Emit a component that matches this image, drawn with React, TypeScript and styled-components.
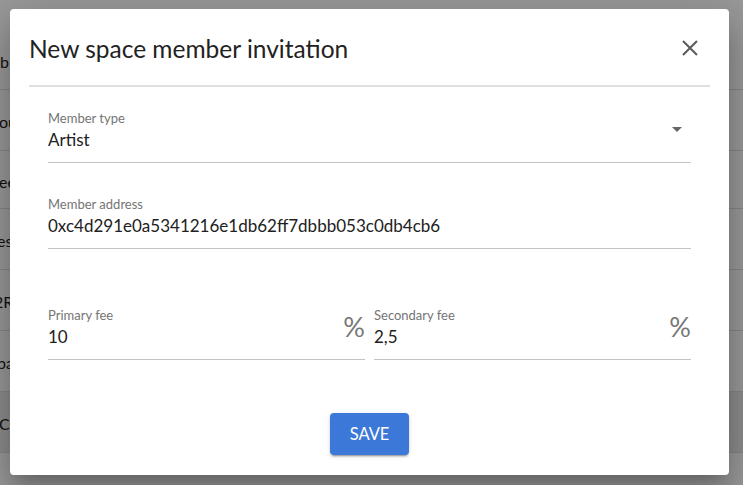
import React from "react";
import styled, { createGlobalStyle } from "styled-components";

const Global = createGlobalStyle`
  html, body { margin: 0; padding: 0; }
  body { font-family: Lato, "Open Sans", sans-serif; background: #fff; }
  * { box-sizing: border-box; }
`;

const Page = styled.div`
  position: relative;
  width: 743px;
  height: 485px;
  overflow: hidden;
  background: #fff;
`;

const BgList = styled.div`
  display: flex;
  flex-direction: column;
  padding-top: 31px;
`;

const BgRow = styled.div<{ $h: number; $hl?: boolean }>`
  height: ${(p) => p.$h}px;
  border-bottom: 1px solid #e0e0e0;
  display: flex;
  align-items: center;
  font-size: 16px;
  color: #1e1e1e;
  background: ${(p) => (p.$hl ? "#ececec" : "transparent")};
  white-space: nowrap;
  padding-top: 3px;
`;

const BgText = styled.span<{ $off: number }>`
  margin-left: ${(p) => p.$off}px;
`;

const Backdrop = styled.div`
  position: absolute;
  inset: 0;
  background: rgba(0, 0, 0, 0.4);
  display: flex;
  padding: 9px 14px 10px 10px;
`;

const Dialog = styled.div`
  flex: 1;
  background: #fff;
  border-radius: 4px;
  box-shadow: 0 11px 15px -7px rgba(0,0,0,0.2), 0 24px 38px 3px rgba(0,0,0,0.14), 0 9px 46px 8px rgba(0,0,0,0.12);
  display: flex;
  flex-direction: column;
`;

const Header = styled.div`
  display: flex;
  align-items: center;
  justify-content: space-between;
  height: 78px;
  margin: 0 19px;
  padding: 2px 12px 0 0;
  border-bottom: 2px solid #e0e0e0;
`;

const Title = styled.h2`
  margin: 0;
  font-size: 24.5px;
  font-weight: 400;
  color: #222;
`;

const CloseBtn = styled.button`
  border: none;
  background: none;
  padding: 0;
  width: 16px;
  height: 16px;
  display: flex;
  cursor: pointer;
`;

const Body = styled.div`
  display: flex;
  flex-direction: column;
  padding: 23px 38px 0 38px;
`;

const Field = styled.div<{ $mt?: number }>`
  display: flex;
  align-items: flex-end;
  margin-top: ${(p) => p.$mt ?? 0}px;
  border-bottom: 1px solid #c4c4c4;
  flex: 1;
`;

const FieldInner = styled.div`
  flex: 1;
  display: flex;
  flex-direction: column;
  padding-bottom: 11px;
`;

const Label = styled.label`
  font-size: 13px;
  color: #757575;
  line-height: 16px;
`;

const Value = styled.div`
  font-size: 17px;
  color: #212121;
  line-height: 22px;
  margin-top: 3px;
`;

const Arrow = styled.div`
  width: 0;
  height: 0;
  border-left: 5px solid transparent;
  border-right: 5px solid transparent;
  border-top: 5px solid #666;
  margin: 0 9px 30px 0;
`;

const Percent = styled.span`
  font-size: 27px;
  font-weight: 400;
  color: #777;
  line-height: 28px;
  margin-bottom: 18px;
`;

const FeeRow = styled.div`
  display: flex;
  gap: 9px;
  margin-top: 58px;
`;

const Footer = styled.div`
  display: flex;
  justify-content: center;
  padding-top: 53px;
`;

const SaveBtn = styled.button`
  width: 79px;
  height: 42px;
  border: none;
  border-radius: 4px;
  background: #3c78d8;
  color: #fff;
  font-family: Lato, sans-serif;
  font-size: 16.5px;
  text-transform: uppercase;
  box-shadow: 0 3px 1px -2px rgba(0,0,0,0.2), 0 2px 2px 0 rgba(0,0,0,0.14), 0 1px 5px 0 rgba(0,0,0,0.12);
  cursor: pointer;
`;

const bgRows: { t: string; off: number; h: number; hl?: boolean }[] = [
  { t: "b", off: 0, h: 59 },
  { t: "ou", off: -1, h: 61 },
  { t: "ee", off: -1, h: 58 },
  { t: "es", off: -3, h: 61 },
  { t: "2R", off: -6, h: 61 },
  { t: "pa", off: -3, h: 61 },
  { t: "C", off: -1, h: 61, hl: true },
];

export default function App() {
  return (
    <>
      <Global />
      <Page>
        <BgList>
          {bgRows.map((r, i) => (
            <BgRow key={i} $h={r.h} $hl={r.hl}>
              <BgText $off={r.off}>{r.t}</BgText>
            </BgRow>
          ))}
        </BgList>
        <Backdrop>
          <Dialog>
            <Header>
              <Title>New space member invitation</Title>
              <CloseBtn aria-label="close">
                <svg width="16" height="16" viewBox="0 0 16 16">
                  <path d="M1 1 L15 15 M15 1 L1 15" stroke="#5a5a5a" strokeWidth="2" />
                </svg>
              </CloseBtn>
            </Header>
            <Body>
              <Field>
                <FieldInner>
                  <Label>Member type</Label>
                  <Value>Artist</Value>
                </FieldInner>
                <Arrow />
              </Field>
              <Field $mt={33}>
                <FieldInner>
                  <Label>Member address</Label>
                  <Value>0xc4d291e0a5341216e1db62ff7dbbb053c0db4cb6</Value>
                </FieldInner>
              </Field>
              <FeeRow>
                <Field>
                  <FieldInner>
                    <Label>Primary fee</Label>
                    <Value>10</Value>
                  </FieldInner>
                  <Percent>%</Percent>
                </Field>
                <Field>
                  <FieldInner>
                    <Label>Secondary fee</Label>
                    <Value>2,5</Value>
                  </FieldInner>
                  <Percent>%</Percent>
                </Field>
              </FeeRow>
              <Footer>
                <SaveBtn>Save</SaveBtn>
              </Footer>
            </Body>
          </Dialog>
        </Backdrop>
      </Page>
    </>
  );
}
